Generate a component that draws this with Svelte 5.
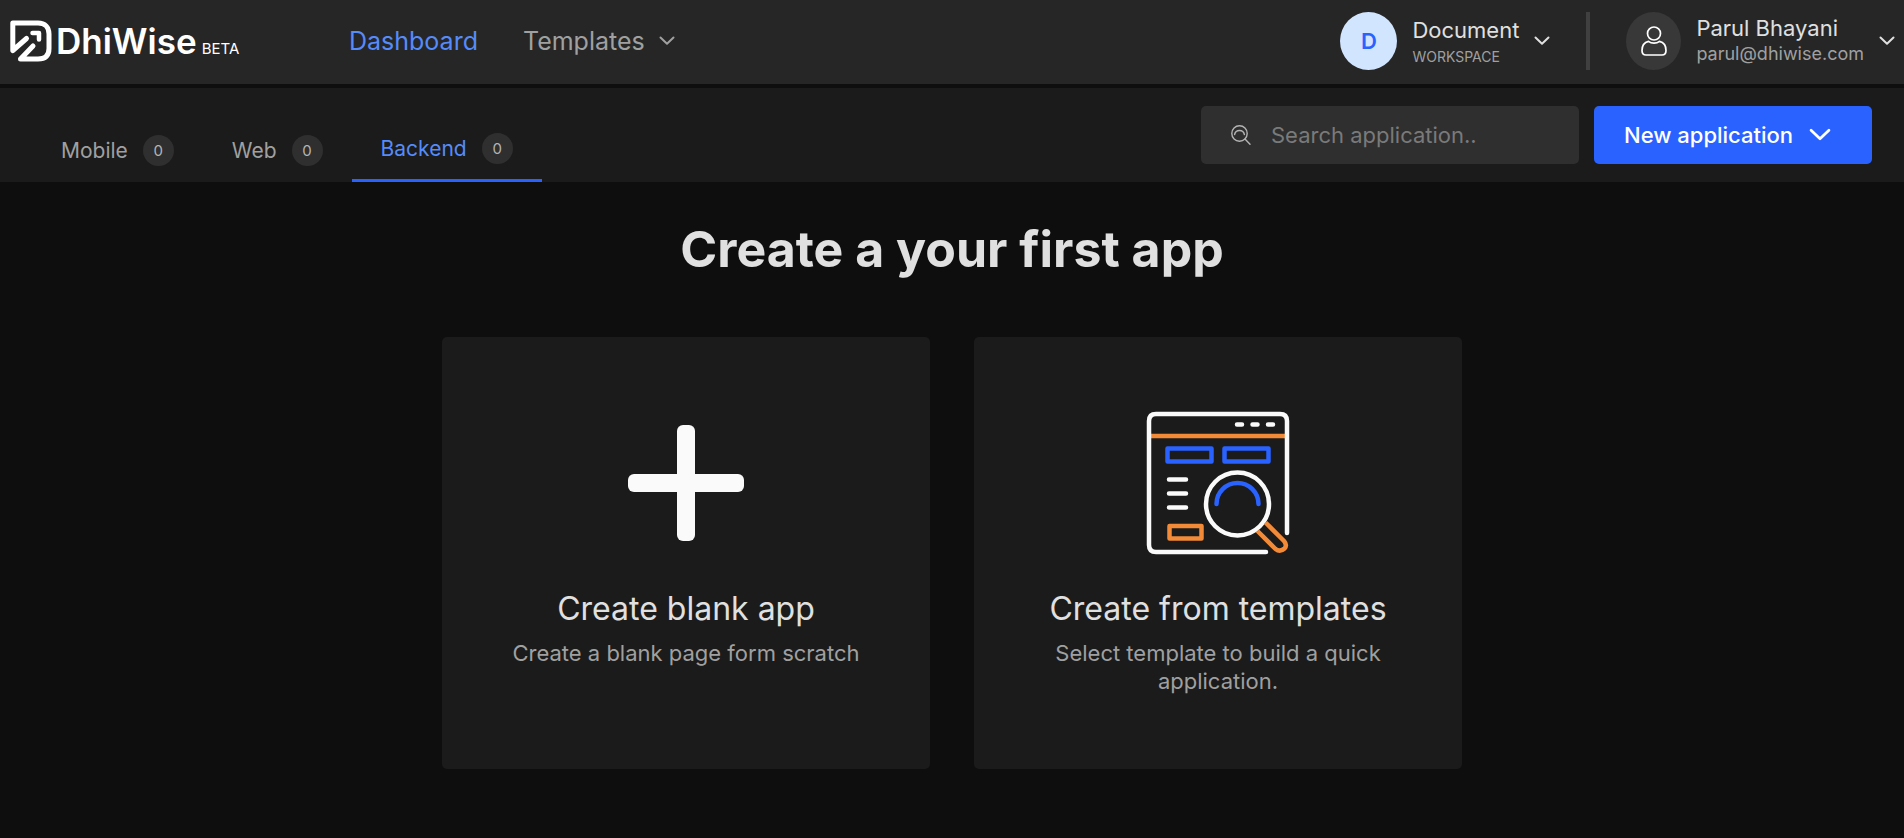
<script>
  const tabs = [
    { name: 'Mobile', count: 0 },
    { name: 'Web', count: 0 },
    { name: 'Backend', count: 0 }
  ];
  let active = $state('Backend');
  let query = $state('');
</script>

{#snippet chevron(size, weight)}
  <svg class="chevron" width={size} height={size} viewBox="0 0 16 16" fill="none" stroke="currentColor" stroke-width={weight} stroke-linecap="round" stroke-linejoin="round" aria-hidden="true">
    <path d="M1.500 4.500 8 10.700 14.500 4.500" />
  </svg>
{/snippet}

<div class="page">
  <header class="topbar">
    <a class="brand" href="#home">
      <svg width="42" height="42" viewBox="0 0 42 42" fill="none" stroke="#fff" stroke-width="5" stroke-linecap="round" stroke-linejoin="round" aria-hidden="true">
        <path d="M16.500 18.500 2.800 30.500V3.100H28C35 3.100 39 7 39 14V28.500C39 35.500 35 39 28 39H10.500L23 26" />
        <path d="M22.500 13H29V19.500" stroke-width="4.500" />
      </svg>
      <span class="wordmark">DhiWise</span>
      <span class="beta">BETA</span>
    </a>

    <nav class="mainnav" aria-label="Main">
      <a class="current" href="#dashboard">Dashboard</a>
      <button type="button">Templates {@render chevron(16, 2)}</button>
    </nav>

    <div class="account">
      <button type="button" class="workspace">
        <span class="avatar">D</span>
        <span class="lines">
          <span class="name">Document</span>
          <span class="kind">WORKSPACE</span>
        </span>
        {@render chevron(16, 2)}
      </button>
      <span class="divider"></span>
      <button type="button" class="user">
        <span class="avatar dark">
          <svg width="26" height="30" viewBox="0 0 26 30" fill="none" stroke="#fff" stroke-width="1.700" stroke-linejoin="round" aria-hidden="true">
            <circle cx="13" cy="7.500" r="6.500" />
            <path d="M7.500 15.300C3.500 16.200 1 19.500 1 24.500C1 27.500 2.500 29 5 29H21C23.500 29 25 27.500 25 24.500C25 19.500 22.500 16.200 18.500 15.300C15.500 17.800 10.500 17.800 7.500 15.300Z" />
          </svg>
        </span>
        <span class="lines">
          <span class="name">Parul Bhayani</span>
          <span class="mail">parul@dhiwise.com</span>
        </span>
        {@render chevron(16, 2)}
      </button>
    </div>
  </header>

  <div class="subbar">
    <div class="tabs" role="tablist">
      {#each tabs as tab}
        <button type="button" role="tab" aria-selected={active === tab.name} class:active={active === tab.name} onclick={() => (active = tab.name)}>
          {tab.name}
          <span class="count">{tab.count}</span>
        </button>
      {/each}
    </div>
    <div class="actions">
      <label class="search">
        <svg width="20" height="20" viewBox="0 0 20 20" fill="none" stroke="#b4b4b4" stroke-width="1.400" stroke-linecap="round" aria-hidden="true">
          <circle cx="8.500" cy="8.500" r="7.700" />
          <path d="M14 14 19 19.200M3.600 9.500A5 5 0 0 1 13.400 9.500" />
        </svg>
        <input type="text" placeholder="Search application.." aria-label="Search application" bind:value={query} />
      </label>
      <button type="button" class="new">New application {@render chevron(22, 2)}</button>
    </div>
  </div>

  <main>
    <h1>Create a your first app</h1>
    <div class="cards">
      <button type="button" class="card">
        <svg width="144" height="144" viewBox="0 0 144 144" fill="#fafafa" aria-hidden="true">
          <rect x="14" y="63" width="116" height="18" rx="6" />
          <rect x="63" y="14" width="18" height="116" rx="6" />
        </svg>
        <span class="title">Create blank app</span>
        <span class="desc">Create a blank page form scratch</span>
      </button>
      <button type="button" class="card">
        <svg width="144" height="144" viewBox="0 -1 144 144" fill="none" stroke-width="4.500" stroke-linecap="round" stroke-linejoin="round" aria-hidden="true">
          <path d="M5 24H139" stroke="#f28a38" stroke-linecap="butt" />
          <g stroke="#fafafa">
            <path d="M141 121V9Q141 2 134 2H10Q3 2 3 9V133Q3 140 10 140H120" />
            <path d="M91 12.500H96M106.500 12.500H111.500M122 12.500H127M23 67.500H40M23 81.500H40M23 95.500H40" />
            <circle cx="91.500" cy="92" r="31.500" />
          </g>
          <g stroke="#2962ff">
            <path d="M21.500 36.500H65.500V49.500H21.500ZM78.500 36.500H122.500V49.500H78.500Z" />
            <path d="M70.500 92A21 21 0 0 1 112.500 92" />
          </g>
          <g stroke="#f28a38">
            <path d="M23.500 114H55.500V126.500H23.500Z" />
            <path d="M119.500 110.500 138 129Q141.500 133 138.500 136.500Q134 140.500 129.500 137L111.500 119" stroke-linecap="butt" />
          </g>
        </svg>
        <span class="title">Create from templates</span>
        <span class="desc">Select template to build a quick application.</span>
      </button>
    </div>
  </main>
</div>

<style>
  :global(body) {
    margin: 0;
    background: #0e0e0e;
  }
  .page {
    font-family: Inter, 'Liberation Sans', sans-serif;
    color: #e0e0e0;
    min-height: 100vh;
  }
  button {
    font: inherit;
    color: inherit;
    background: none;
    border: 0;
    padding: 0;
    cursor: pointer;
  }
  a {
    text-decoration: none;
    color: inherit;
  }
  .chevron {
    flex: none;
  }
  .topbar {
    display: flex;
    align-items: center;
    box-sizing: border-box;
    height: 88px;
    padding: 0 9px 2px 10px;
    background: #262626;
    border-bottom: 4px solid #0e0e0e;
  }
  .brand {
    display: flex;
    align-items: baseline;
    width: 240px;
    color: #fff;
  }
  .brand svg {
    flex: none;
    align-self: center;
    margin-right: 4px;
  }
  .wordmark {
    font-size: 35px;
    font-weight: 600;
    line-height: 42px;
  }
  .beta {
    margin-left: 5px;
    font-size: 15px;
  }
  .mainnav {
    display: flex;
    align-items: center;
    gap: 45px;
    margin-left: 99px;
    font-size: 25px;
    line-height: 32px;
    color: #a0a0a0;
  }
  .mainnav .current {
    color: #558bfa;
  }
  .mainnav button {
    display: flex;
    align-items: center;
    gap: 14px;
  }
  .account {
    display: flex;
    align-items: center;
    margin-left: auto;
  }
  .workspace,
  .user {
    display: flex;
    align-items: center;
    gap: 15px;
    text-align: left;
    white-space: nowrap;
  }
  .avatar {
    display: flex;
    align-items: center;
    justify-content: center;
    width: 57px;
    height: 58px;
    border-radius: 50%;
    background: #d1e5ff;
    color: #2962ff;
    font-size: 22px;
    font-weight: 600;
  }
  .avatar.dark {
    width: 55px;
    background: #383838;
  }
  .lines {
    display: flex;
    flex-direction: column;
  }
  .workspace .lines {
    padding-top: 4px;
  }
  .user .lines {
    padding-bottom: 3px;
  }
  .name {
    font-size: 22px;
    line-height: 28px;
  }
  .kind {
    font-size: 14px;
    line-height: 26px;
    color: #a0a0a0;
  }
  .mail {
    font-size: 18px;
    line-height: 24px;
    color: #a0a0a0;
  }
  .divider {
    width: 4px;
    height: 58px;
    margin: 0 36px;
    background: #404040;
  }
  .subbar {
    display: flex;
    justify-content: space-between;
    height: 94px;
    padding: 0 32px;
    background: #1b1b1b;
  }
  .tabs {
    display: flex;
    color: #a0a0a0;
  }
  .tabs button {
    display: flex;
    align-items: center;
    gap: 15px;
    padding: 30px 29px 0;
    font-size: 21px;
  }
  .tabs .active {
    color: #558bfa;
    border-bottom: 3px solid #2962ff;
  }
  .count {
    display: flex;
    align-items: center;
    justify-content: center;
    width: 31px;
    height: 31px;
    border-radius: 50%;
    background: #2f2f2f;
    color: #b4b4b4;
    font-size: 15px;
  }
  .actions {
    display: flex;
    align-items: center;
    gap: 15px;
  }
  .search {
    display: flex;
    align-items: center;
    gap: 20px;
    box-sizing: border-box;
    width: 378px;
    height: 58px;
    padding: 0 30px;
    border-radius: 5px;
    background: #2f2f2f;
  }
  .search svg {
    flex: none;
  }
  .search input {
    flex: 1;
    min-width: 0;
    padding: 0;
    border: 0;
    outline: 0;
    background: none;
    font: inherit;
    font-size: 22px;
    color: #e0e0e0;
  }
  .search input::placeholder {
    color: #7a7a7a;
  }
  .new {
    display: flex;
    align-items: center;
    gap: 16px;
    width: 278px;
    height: 58px;
    padding: 0 30px;
    border-radius: 5px;
    background: #2962ff;
    color: #fff;
    font-size: 22px;
    font-weight: 500;
    white-space: nowrap;
  }
  main {
    padding: 35px 32px 68px;
  }
  h1 {
    margin: 0;
    font-size: 50px;
    line-height: 64px;
    font-weight: 700;
    text-align: center;
  }
  .cards {
    display: grid;
    grid-template-columns: 1fr 1fr;
    gap: 44px;
    max-width: 1020px;
    margin: 56px auto 0;
  }
  .card {
    display: flex;
    flex-direction: column;
    align-items: center;
    padding: 74px 60px;
    border-radius: 5px;
    background: #1b1b1b;
  }
  .title {
    margin-top: 34px;
    font-size: 32px;
    line-height: 40px;
  }
  .desc {
    margin-top: 10px;
    font-size: 22px;
    line-height: 28px;
    color: #a0a0a0;
  }
</style>
